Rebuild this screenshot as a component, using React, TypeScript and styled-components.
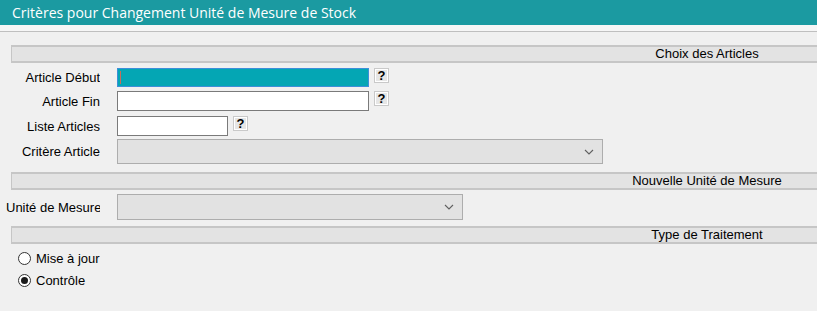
import styled, { createGlobalStyle } from "styled-components";

const GlobalStyle = createGlobalStyle`
  html, body {
    margin: 0;
    padding: 0;
    background: #f0f0f0;
    overflow: hidden;
  }
`;

const Window = styled.div`
  width: 817px;
  height: 311px;
  background: #f0f0f0;
  font-family: "Liberation Sans", Arial, sans-serif;
  font-size: 13px;
  color: #000;
  overflow: hidden;
`;

const TitleBar = styled.div`
  height: 25px;
  background: #1b9aa1;
  color: #fff;
  font-family: "Open Sans", sans-serif;
  font-size: 14px;
  display: flex;
  align-items: center;
  padding-left: 12px;
  border-bottom: 6px solid #f6f6f6;
`;

const Panel = styled.div`
  border-top: 1px solid #bfbfbf;
  padding-top: 13px;
  display: flex;
  flex-direction: column;
`;

const SectionBar = styled.div<{ $mt?: number }>`
  margin: ${(p) => p.$mt ?? 0}px 0 0 11px;
  height: 14px;
  background: #e3e3e3;
  border-top: 2px solid #c6c6c6;
  border-bottom: 2px solid #c6c6c6;
  border-left: 1px solid #c6c6c6;
  display: flex;
  justify-content: flex-end;
  padding-right: 10px;
`;

const SectionTitle = styled.span`
  width: 200px;
  text-align: center;
  line-height: 14px;
  white-space: nowrap;
`;

const Row = styled.div<{ $mt?: number; $h: number }>`
  display: flex;
  align-items: center;
  margin-top: ${(p) => p.$mt ?? 0}px;
  height: ${(p) => p.$h}px;
  gap: 5px;
`;

const Label = styled.label<{ $clip?: boolean }>`
  width: 94px;
  margin-left: 6px;
  margin-right: 12px;
  white-space: nowrap;
  overflow: hidden;
  text-align: ${(p) => (p.$clip ? "left" : "right")};
  flex-shrink: 0;
`;

const TextBox = styled.div<{ $w: number; $active?: boolean }>`
  box-sizing: border-box;
  width: ${(p) => p.$w}px;
  height: 100%;
  background: ${(p) => (p.$active ? "#04a6b4" : "#fff")};
  border: 1px solid ${(p) => (p.$active ? "#3d8fd9" : "#7a7a7a")};
  position: relative;
`;

const Caret = styled.span`
  position: absolute;
  left: 2px;
  top: 2px;
  bottom: 2px;
  width: 1px;
  background: #c86c5a;
`;

const HelpButton = styled.button`
  box-sizing: border-box;
  width: 15px;
  height: 15px;
  padding: 0;
  background: #e6e6e6;
  border: 1px solid #c9c9c9;
  box-shadow: inset 0 0 0 1px #fff;
  font-family: "Liberation Sans", Arial, sans-serif;
  font-weight: bold;
  font-size: 13px;
  line-height: 13px;
  color: #000;
  align-self: flex-start;
`;

const Select = styled.div<{ $w: number }>`
  box-sizing: border-box;
  width: ${(p) => p.$w}px;
  height: 100%;
  background: #e2e2e2;
  border: 1px solid #adadad;
  display: flex;
  align-items: center;
  justify-content: flex-end;
  padding-right: 8px;
`;

const RadioGroup = styled.div`
  display: flex;
  flex-direction: column;
  gap: 9px;
  margin: 8px 0 0 18px;
`;

const RadioRow = styled.div`
  display: flex;
  align-items: center;
  gap: 5px;
  height: 13px;
`;

const RadioCircle = styled.span<{ $checked?: boolean }>`
  box-sizing: border-box;
  width: 13px;
  height: 13px;
  border-radius: 50%;
  border: 1px solid #333;
  background: #fff;
  display: flex;
  align-items: center;
  justify-content: center;
  &::after {
    content: "";
    width: 7px;
    height: 7px;
    border-radius: 50%;
    background: ${(p) => (p.$checked ? "#1a1a1a" : "transparent")};
  }
`;

const Chevron = () => (
  <svg width="10" height="6" viewBox="0 0 10 6">
    <path d="M1 1 L5 5 L9 1" fill="none" stroke="#606060" strokeWidth="1.1" />
  </svg>
);

export default function App() {
  return (
    <Window>
      <GlobalStyle />
      <TitleBar>Critères pour Changement Unité de Mesure de Stock</TitleBar>
      <Panel>
        <SectionBar>
          <SectionTitle>Choix des Articles</SectionTitle>
        </SectionBar>
        <Row $mt={5} $h={19}>
          <Label>Article Début</Label>
          <TextBox $w={252} $active>
            <Caret />
          </TextBox>
          <HelpButton>?</HelpButton>
        </Row>
        <Row $mt={4} $h={20}>
          <Label>Article Fin</Label>
          <TextBox $w={252} />
          <HelpButton>?</HelpButton>
        </Row>
        <Row $mt={5} $h={20}>
          <Label>Liste Articles</Label>
          <TextBox $w={111} />
          <HelpButton>?</HelpButton>
        </Row>
        <Row $mt={3} $h={25}>
          <Label>Critère Article</Label>
          <Select $w={486}>
            <Chevron />
          </Select>
        </Row>
        <SectionBar $mt={8}>
          <SectionTitle>Nouvelle Unité de Mesure</SectionTitle>
        </SectionBar>
        <Row $mt={4} $h={26}>
          <Label $clip>Unité de Mesure</Label>
          <Select $w={346}>
            <Chevron />
          </Select>
        </Row>
        <SectionBar $mt={6}>
          <SectionTitle>Type de Traitement</SectionTitle>
        </SectionBar>
        <RadioGroup>
          <RadioRow>
            <RadioCircle />
            <span>Mise à jour</span>
          </RadioRow>
          <RadioRow>
            <RadioCircle $checked />
            <span>Contrôle</span>
          </RadioRow>
        </RadioGroup>
      </Panel>
    </Window>
  );
}
